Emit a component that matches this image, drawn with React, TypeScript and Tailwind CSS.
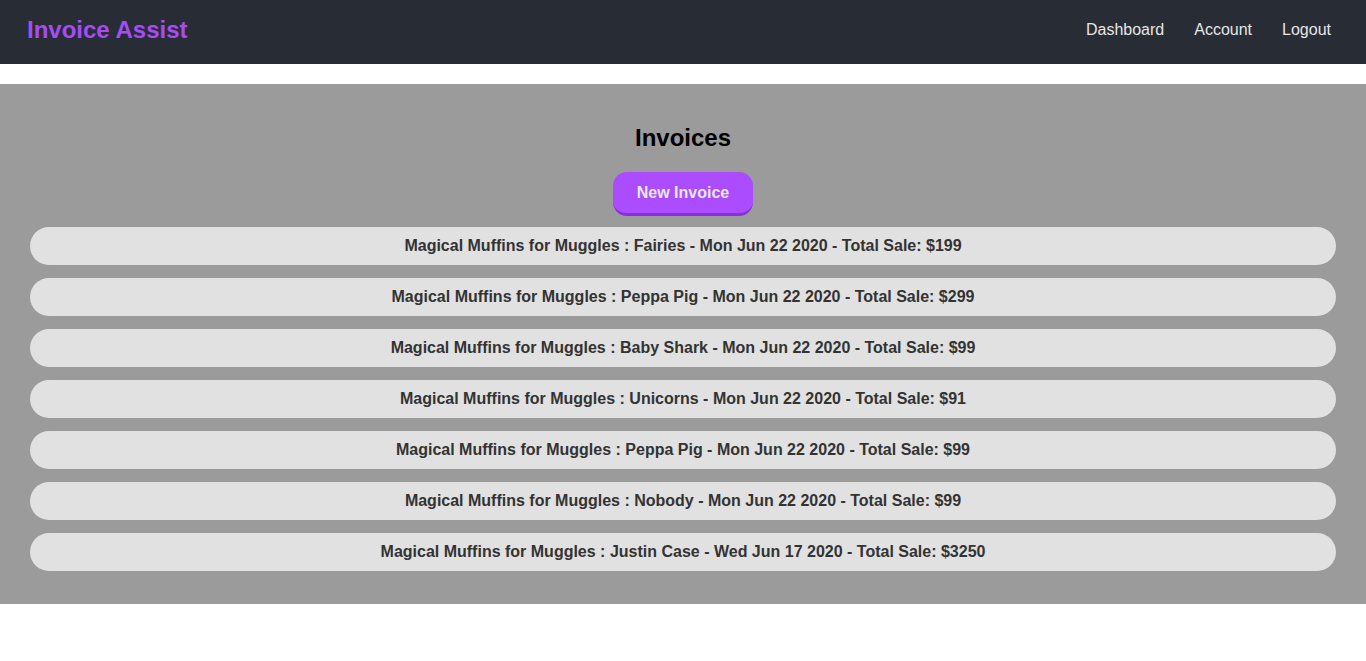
const invoices = [
  { client: "Fairies", date: "Mon Jun 22 2020", total: 199 },
  { client: "Peppa Pig", date: "Mon Jun 22 2020", total: 299 },
  { client: "Baby Shark", date: "Mon Jun 22 2020", total: 99 },
  { client: "Unicorns", date: "Mon Jun 22 2020", total: 91 },
  { client: "Peppa Pig", date: "Mon Jun 22 2020", total: 99 },
  { client: "Nobody", date: "Mon Jun 22 2020", total: 99 },
  { client: "Justin Case", date: "Wed Jun 17 2020", total: 3250 },
];

function Navbar() {
  return (
    <nav className="h-16 bg-[#282c35] flex items-center justify-between pl-[27px] pr-[35px] pb-[4px]">
      <span className="text-[24px] font-bold text-[#a64cf5]">Invoice Assist</span>
      <div className="flex gap-[30px] text-[16px] text-[#e6e6e6]">
        <a href="#">Dashboard</a>
        <a href="#">Account</a>
        <a href="#">Logout</a>
      </div>
    </nav>
  );
}

export default function App() {
  return (
    <div className="min-h-screen bg-white font-['Liberation_Sans',Arial,sans-serif]">
      <Navbar />
      <section className="mt-5 bg-[#9b9b9b] pt-[40px] pb-[33px] px-[30px] flex flex-col items-center">
        <h1 className="text-[24px] font-bold text-black leading-[28px]">Invoices</h1>
        <button className="mt-[20px] w-[140px] h-[44px] rounded-[14px] bg-[#ab4cff] border-b-[3px] border-[#8a2fe0] text-[16px] font-bold text-[#e8e8e8]">
          New Invoice
        </button>
        <div className="mt-[11px] w-full flex flex-col gap-[13px]">
          {invoices.map((inv, i) => (
            <div
              key={i}
              className="h-[38px] rounded-full bg-[#e1e1e1] flex items-center justify-center text-[16px] font-bold text-[#333333]"
            >
              Magical Muffins for Muggles : {inv.client} - {inv.date} - Total Sale: ${inv.total}
            </div>
          ))}
        </div>
      </section>
    </div>
  );
}
